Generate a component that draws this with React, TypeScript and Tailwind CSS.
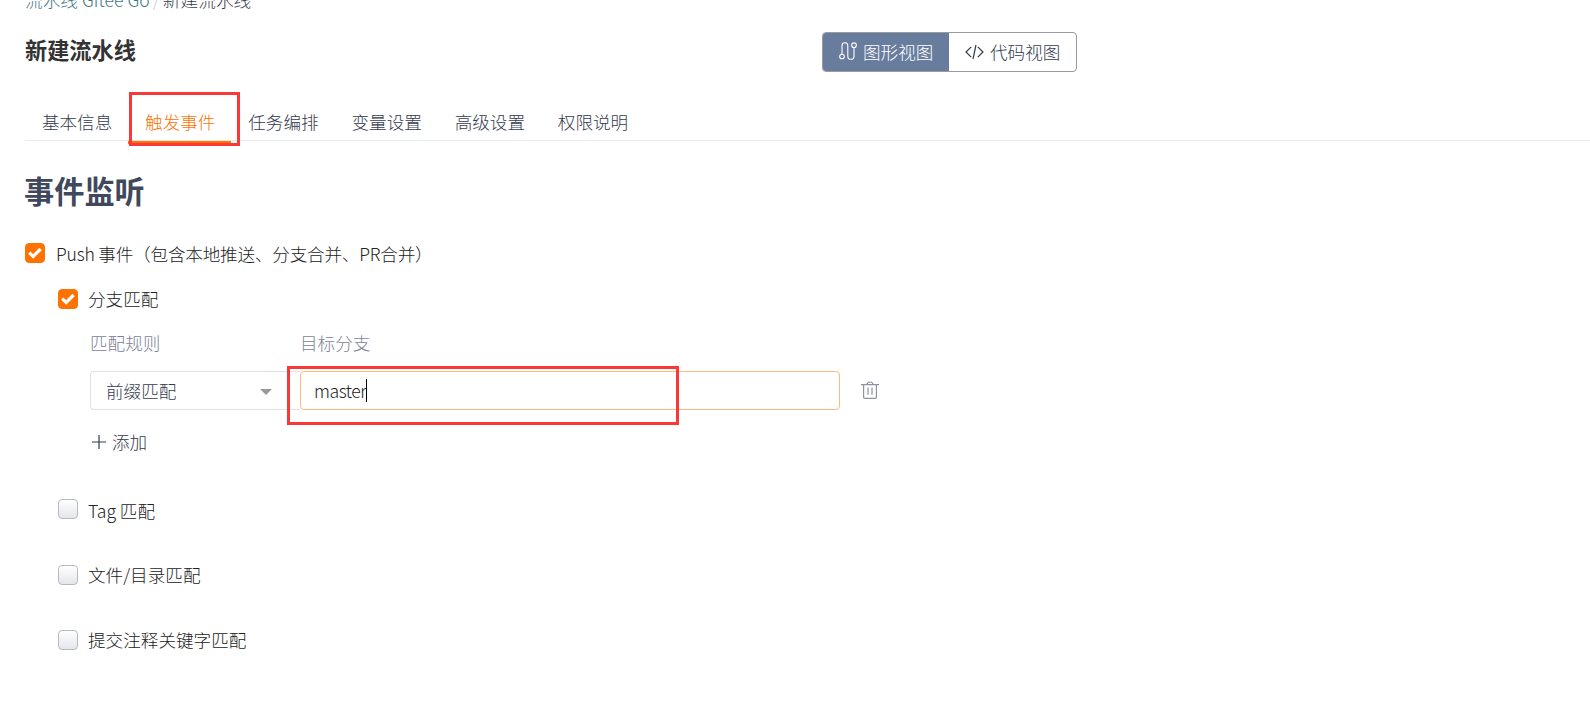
import { ReactNode, useState } from "react";
import { twMerge } from "tailwind-merge";

const TABS = ["基本信息", "触发事件", "任务编排", "变量设置", "高级设置", "权限说明"];

function RouteIcon() {
  return (
    <svg
      width="18"
      height="18"
      viewBox="0 0 18 18"
      fill="none"
      stroke="currentColor"
      strokeWidth="1.1"
      className="-mt-[3px]"
    >
      <circle cx="3" cy="14.5" r="2.3" />
      <circle cx="15" cy="3.2" r="2.3" />
      <path d="M3 12.2V3.6a2.9 2.9 0 0 1 5.8 0v10.6a3.1 3.1 0 0 0 6.2 0V5.5" />
    </svg>
  );
}

function CodeIcon() {
  return (
    <svg
      width="19"
      height="16"
      viewBox="0 0 19 16"
      fill="none"
      stroke="currentColor"
      strokeWidth="1.2"
      className="-mt-px"
    >
      <path d="M6.2 2.8 1 8l5.2 5.2M12.8 2.8 18 8l-5.2 5.2M11 1 8 15" />
    </svg>
  );
}

function TrashIcon() {
  return (
    <svg width="18" height="19" viewBox="0 0 18 19" fill="none" stroke="currentColor" strokeWidth="1.2">
      <path d="M0 3.6h18M6 3.4Q6.4 1 9 1t3 2.4M2.6 4v12.2q0 1.2 1.2 1.2h10.4q1.2 0 1.2-1.2V4M7 6.6v7.2M11 6.6v7.2" />
    </svg>
  );
}

function Checkbox({
  checked,
  onChange,
  className = "",
  labelClass = "",
  children,
}: {
  checked: boolean;
  onChange: () => void;
  className?: string;
  labelClass?: string;
  children: ReactNode;
}) {
  return (
    <div
      role="checkbox"
      aria-checked={checked}
      onClick={onChange}
      className={twMerge("flex h-5 items-start gap-[10px] cursor-pointer select-none text-[#222]", className)}
    >
      <span
        className={twMerge(
          "flex size-5 shrink-0 items-center justify-center rounded-[4px] border border-[#b9babe] bg-linear-to-b from-white to-[#e4e6ed]",
          checked && "border-[#fe7300] bg-none bg-[#fe7300]"
        )}
      >
        {checked && (
          <svg width="14" height="12" viewBox="0 0 14 12" fill="none" stroke="white" strokeWidth="3.2">
            <path d="m1.2 5.6 4 3.8 7.4-7.4" />
          </svg>
        )}
      </span>
      <span className={twMerge("leading-[20px] whitespace-nowrap", labelClass)}>{children}</span>
    </div>
  );
}

export default function App() {
  const [tab, setTab] = useState("触发事件");
  const [branch, setBranch] = useState("master");
  const [events, setEvents] = useState({ push: true, branch: true, tag: false, file: false, comment: false });
  const toggle = (key: keyof typeof events) => setEvents({ ...events, [key]: !events[key] });

  return (
    <div className="h-[702px] overflow-hidden bg-white pl-[25px] font-['Noto_Sans_CJK_SC',sans-serif] text-[17.6px] font-light text-[#333b4e]">
      <div className="-mt-[13px] flex h-[26px] items-center whitespace-nowrap leading-[26px]">
        <span className="text-[#437682] tracking-[0.06px]">流水线 Gitee Go</span>
        <span className="w-[13px] text-center text-[#c8cbd0]">/</span>
        <span className="tracking-[0.1px]">新建流水线</span>
      </div>

      <div className="mt-[19px] flex h-10 items-center">
        <h1 className="w-[797px] text-[22.2px] font-bold leading-[30px] text-[#333] -mt-[7px]">新建流水线</h1>
        <div className="flex h-10 w-[255px] overflow-hidden rounded-[4px] border border-[#9b9b9f]">
          <button className="-my-px -ml-px flex w-[127px] items-center gap-[6px] bg-[#687d9e] pl-[17px] text-white">
            <RouteIcon />
            图形视图
          </button>
          <button className="flex flex-1 items-center gap-[6px] pl-[16px]">
            <CodeIcon />
            代码视图
          </button>
        </div>
      </div>

      <div className="relative mt-5 flex h-[49px] border-b border-[#e8eaec]">
        {TABS.map((e) => (
          <button
            key={e}
            onClick={() => setTab(e)}
            className={twMerge(
              "h-[52px] w-[103.2px] shrink-0 border-b-[3px] border-transparent pb-[20px] pt-[17px] pl-px leading-[26px]",
              e === tab && "border-[#fe7300] text-[#fe7300]"
            )}
          >
            {e}
          </button>
        ))}
        <div className="absolute left-[104px] top-0 h-[54px] w-[111px] border-[3px] border-[#fb3838]" />
      </div>

      <h2 className="mt-[29px] mb-[33px] -ml-px text-[30.2px] font-bold leading-10 text-[#40485b]">事件监听</h2>

      <Checkbox
        checked={events.push}
        onChange={() => toggle("push")}
        labelClass="pl-px leading-[22px] tracking-[-0.2px]"
      >
        Push 事件（包含本地推送、分支合并、PR合并）
      </Checkbox>

      <div className="pl-[33px]">
        <Checkbox className="mt-[26px]" checked={events.branch} onChange={() => toggle("branch")}>
          分支匹配
        </Checkbox>

        <div className="relative ml-8 mt-[20px]">
          <div className="flex h-[26px] leading-[28px] text-[#7c8296]">
            <span className="w-[210px]">匹配规则</span>
            <span>目标分支</span>
          </div>
          <div className="mt-4 flex h-[39px] items-center">
            <div className="flex h-full w-[210px] items-center rounded-l-[4px] border border-r-0 border-[#dfe0eb] pl-[15px] pr-7">
              <span className="flex-1 pt-[2px]">前缀匹配</span>
              <span className="mt-[3px] border-x-[6px] border-t-[6px] border-x-transparent border-t-[#999]" />
            </div>
            <div className="flex h-full w-[540px] items-center rounded-[4px] border border-[#ffb97d] pl-[13px] text-[#222]">
              <span className="pt-[2px] tracking-[-0.45px]" onClick={() => setBranch("master")}>
                {branch}
              </span>
              <span className="h-[23px] w-px bg-black" />
            </div>
            <button className="ml-[21px] text-[#8c92a4]">
              <TrashIcon />
            </button>
          </div>
          <div className="absolute left-[197px] top-[37px] h-[59px] w-[392px] border-[3px] border-[#fb3838]" />
          <button className="mt-[19px] flex h-[26px] items-center gap-[6px] pl-[2px]">
            <svg width="14" height="14" viewBox="0 0 14 14" stroke="currentColor" strokeWidth="1.2">
              <path d="M0 7h14M7 0v14" />
            </svg>
            添加
          </button>
        </div>

        <Checkbox
          className="mt-[44px]"
          labelClass="leading-[23px]"
          checked={events.tag}
          onChange={() => toggle("tag")}
        >
          Tag 匹配
        </Checkbox>
        <Checkbox className="mt-[46px]" checked={events.file} onChange={() => toggle("file")}>
          文件/目录匹配
        </Checkbox>
        <Checkbox className="mt-[45px]" checked={events.comment} onChange={() => toggle("comment")}>
          提交注释关键字匹配
        </Checkbox>
      </div>
    </div>
  );
}
